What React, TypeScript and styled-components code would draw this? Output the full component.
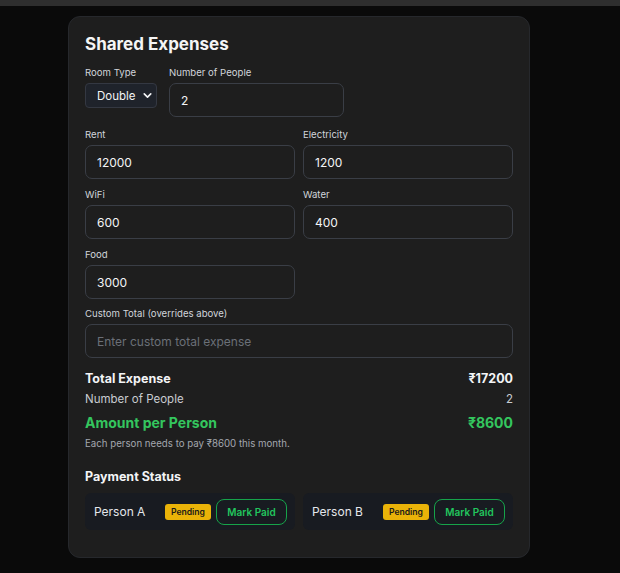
import React from 'react';
import styled, { createGlobalStyle } from 'styled-components';
import { ChevronDown } from 'lucide-react';

const GlobalStyle = createGlobalStyle`
  html, body {
    margin: 0;
    padding: 0;
    background: #0a0a0a;
    font-family: Inter, 'Noto Sans', sans-serif;
    color: #f3f4f6;
  }
  * { box-sizing: border-box; }
`;

const TopBar = styled.div`
  height: 6px;
  background: #2e2e2e;
`;

const Page = styled.div`
  padding: 10px 0 15px 68px;
`;

const Card = styled.div`
  width: 462px;
  background: #1e1e1e;
  border: 1px solid #26282c;
  border-radius: 12px;
  padding: 16px 16px 27px;
`;

const Title = styled.h2`
  margin: 0 0 11px;
  font-size: 17px;
  line-height: 22px;
  font-weight: 700;
  color: #f5f5f5;
`;

const TopRow = styled.div`
  display: flex;
  gap: 12px;
  align-items: flex-start;
  margin-bottom: 11px;
`;

const Grid = styled.div`
  display: grid;
  grid-template-columns: 1fr 1fr;
  column-gap: 8px;
  row-gap: 9px;
  margin-bottom: 8px;
`;

const Field = styled.div<{ $width?: number }>`
  display: flex;
  flex-direction: column;
  width: ${(p) => (p.$width ? `${p.$width}px` : 'auto')};
`;

const Label = styled.label`
  font-size: 9.6px;
  line-height: 13px;
  color: #d1d5db;
  margin-bottom: 4px;
`;

const Input = styled.input`
  height: 34px;
  width: 100%;
  background: #1e1e1e;
  border: 1px solid #3a3e46;
  border-radius: 7px;
  padding: 0 11px;
  font-family: inherit;
  font-size: 12px;
  color: #f3f4f6;
  outline: none;

  &::placeholder {
    color: #6b7078;
  }
`;

const SelectWrap = styled.div`
  position: relative;
  width: 72px;
`;

const Select = styled.select`
  appearance: none;
  width: 72px;
  height: 25px;
  background: #1f232b;
  border: 1px solid #343842;
  border-radius: 4px;
  padding: 0 0 0 11px;
  font-family: inherit;
  font-size: 11.5px;
  color: #f3f4f6;
  outline: none;
`;

const Chevron = styled(ChevronDown)`
  position: absolute;
  right: 3px;
  top: 6px;
  pointer-events: none;
  color: #f3f4f6;
`;

const Summary = styled.div`
  margin-top: 12px;
`;

const SumRow = styled.div<{ $size: number; $bold?: boolean; $color?: string; $mt?: number }>`
  display: flex;
  justify-content: space-between;
  font-size: ${(p) => p.$size}px;
  line-height: ${(p) => p.$size + 5}px;
  font-weight: ${(p) => (p.$bold ? 700 : 400)};
  color: ${(p) => p.$color || '#f3f4f6'};
  margin-top: ${(p) => p.$mt || 0}px;
`;

const Note = styled.p`
  margin: 5px 0 0;
  font-size: 9.7px;
  line-height: 13px;
  color: #a3a7ae;
`;

const SectionTitle = styled.h3`
  margin: 18px 0 7px;
  font-size: 12.5px;
  line-height: 18px;
  font-weight: 700;
  color: #f3f4f6;
`;

const People = styled.div`
  display: grid;
  grid-template-columns: 1fr 1fr;
  gap: 8px;
`;

const PersonCard = styled.div`
  height: 37px;
  background: #181b21;
  border-radius: 6px;
  display: flex;
  align-items: center;
  padding: 0 8px 0 9px;
`;

const Name = styled.span`
  flex: 1;
  font-size: 12px;
  color: #e5e7eb;
`;

const Badge = styled.span`
  background: #eab308;
  color: #1a1a1a;
  font-size: 8.6px;
  font-weight: 600;
  line-height: 12px;
  padding: 2px 6px;
  border-radius: 3px;
  margin-right: 5px;
`;

const PaidButton = styled.button`
  height: 26px;
  width: 71px;
  background: transparent;
  border: 1.5px solid #16a34a;
  border-radius: 8px;
  color: #22c55e;
  font-family: inherit;
  font-size: 10px;
  font-weight: 600;
  padding: 0;
`;

const costs = [
  { label: 'Rent', value: '12000' },
  { label: 'Electricity', value: '1200' },
  { label: 'WiFi', value: '600' },
  { label: 'Water', value: '400' },
  { label: 'Food', value: '3000' },
];

export default function App() {
  return (
    <>
      <GlobalStyle />
      <TopBar />
      <Page>
        <Card>
          <Title>Shared Expenses</Title>
          <TopRow>
            <Field>
              <Label>Room Type</Label>
              <SelectWrap>
                <Select defaultValue="double">
                  <option value="single">Single</option>
                  <option value="double">Double</option>
                  <option value="triple">Triple</option>
                </Select>
                <Chevron size={13} strokeWidth={3} />
              </SelectWrap>
            </Field>
            <Field $width={175}>
              <Label>Number of People</Label>
              <Input defaultValue="2" />
            </Field>
          </TopRow>
          <Grid>
            {costs.map((c) => (
              <Field key={c.label}>
                <Label>{c.label}</Label>
                <Input defaultValue={c.value} />
              </Field>
            ))}
          </Grid>
          <Field>
            <Label>Custom Total (overrides above)</Label>
            <Input placeholder="Enter custom total expense" />
          </Field>
          <Summary>
            <SumRow $size={12.5} $bold>
              <span>Total Expense</span>
              <span>₹17200</span>
            </SumRow>
            <SumRow $size={11.5} $color="#c9ccd1" $mt={3}>
              <span>Number of People</span>
              <span>2</span>
            </SumRow>
            <SumRow $size={14} $bold $color="#34c65e" $mt={6}>
              <span>Amount per Person</span>
              <span>₹8600</span>
            </SumRow>
            <Note>Each person needs to pay ₹8600 this month.</Note>
          </Summary>
          <SectionTitle>Payment Status</SectionTitle>
          <People>
            {['Person A', 'Person B'].map((n) => (
              <PersonCard key={n}>
                <Name>{n}</Name>
                <Badge>Pending</Badge>
                <PaidButton>Mark Paid</PaidButton>
              </PersonCard>
            ))}
          </People>
        </Card>
      </Page>
    </>
  );
}
